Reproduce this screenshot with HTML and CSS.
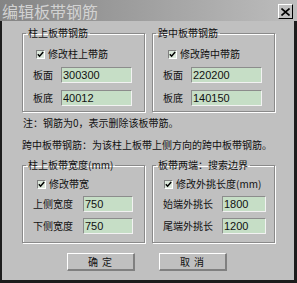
FILE: index.html
```html
<html lang="zh">
    <head>
        <title>编辑板带钢筋</title>
        <link rel="stylesheet" href="styles.css">
    </head>
    <body>
        <div class="window">
            <div class="titlebar">
                <span class="title">编辑板带钢筋</span>
                <span class="close">
                    <svg width="9" height="8" viewBox="0 0 9 8"><path d="M0.5 0.5 L8.5 7.5 M8.5 0.5 L0.5 7.5" stroke="#000" stroke-width="1.6" fill="none"/></svg>
                </span>
            </div>
            <div class="client">
                <div class="pair top-pair">
                    <fieldset class="group">
                        <legend>柱上板带钢筋</legend>
                        <div class="check-row"><span class="check"><svg width="7" height="7" viewBox="0 0 7 7"><path d="M0.8 3.2 L2.6 5.2 L6.2 1" stroke="#000" stroke-width="1.5" fill="none"/></svg></span>修改柱上带筋</div>
                        <div class="field"><span class="label">板面</span><input class="entry" type="text" value="300300"></div>
                        <div class="field"><span class="label">板底</span><input class="entry" type="text" value="40012"></div>
                    </fieldset>
                    <fieldset class="group">
                        <legend>跨中板带钢筋</legend>
                        <div class="check-row right"><span class="check"><svg width="7" height="7" viewBox="0 0 7 7"><path d="M0.8 3.2 L2.6 5.2 L6.2 1" stroke="#000" stroke-width="1.5" fill="none"/></svg></span>修改跨中带筋</div>
                        <div class="field"><span class="label">板面</span><input class="entry" type="text" value="220200"></div>
                        <div class="field"><span class="label">板底</span><input class="entry" type="text" value="140150"></div>
                    </fieldset>
                </div>

                <p class="note first">注：钢筋为0，表示删除该板带筋。</p>
                <p class="note">跨中板带钢筋：为该柱上板带上侧方向的跨中板带钢筋。</p>

                <div class="pair bottom-pair">
                    <fieldset class="group">
                        <legend>柱上板带宽度(mm)</legend>
                        <div class="check-row"><span class="check"><svg width="7" height="7" viewBox="0 0 7 7"><path d="M0.8 3.2 L2.6 5.2 L6.2 1" stroke="#000" stroke-width="1.5" fill="none"/></svg></span>修改带宽</div>
                        <div class="field"><span class="label wide">上侧宽度</span><input class="entry short" type="text" value="750"></div>
                        <div class="field"><span class="label wide">下侧宽度</span><input class="entry short" type="text" value="750"></div>
                    </fieldset>
                    <fieldset class="group">
                        <legend>板带两端：搜索边界</legend>
                        <div class="check-row near"><span class="check"><svg width="7" height="7" viewBox="0 0 7 7"><path d="M0.8 3.2 L2.6 5.2 L6.2 1" stroke="#000" stroke-width="1.5" fill="none"/></svg></span>修改外挑长度(mm)</div>
                        <div class="field"><span class="label wider">始端外挑长</span><input class="entry shorter" type="text" value="1800"></div>
                        <div class="field"><span class="label wider">尾端外挑长</span><input class="entry shorter" type="text" value="1200"></div>
                    </fieldset>
                </div>

                <div class="buttons">
                    <span class="btn">确&nbsp;定</span>
                    <span class="btn">取&nbsp;消</span>
                </div>
            </div>
        </div>
    </body>
</html>
```

FILE: styles.css
```css
body{
    margin:0;
    background:#c0c0c0;
    font-family: "Noto Sans CJK SC", "Noto Sans", sans-serif;
}
.window{
    width:297px;
    height:283px;
    display:flex;
    flex-direction:column;
}
.titlebar{
    height:21px;
    display:flex;
    align-items:center;
    justify-content:space-between;
    background:linear-gradient(to right, #848484, #bdbdbd);
    padding-left:2px;
    padding-right:4px;
}
.title{
    font-size:16px;
    line-height:18px;
    color:#d2d2d2;
}
.close{
    width:13px;
    height:13px;
    display:flex;
    align-items:center;
    justify-content:center;
    background:#c0c0c0;
    border-top:1px solid #fff;
    border-left:1px solid #fff;
    border-right:1px solid #000;
    border-bottom:1px solid #000;
    margin-top:2px;
}
.client{
    flex:1;
    border-left:2px solid #1c1c1c;
    border-right:3px solid #1c1c1c;
    border-bottom:3px solid #1c1c1c;
    padding-left:20px;
    font-size:10px;
    line-height:12px;
    color:#111;
}
.pair{
    display:grid;
    grid-template-columns:123px 123px;
    gap:7px;
}
.top-pair{
    margin-top:6px;
}
.bottom-pair{
    margin-top:8px;
}
.group{
    margin:0;
    padding:0 0 5px 0;
    border:1px solid #8a8a8a;
    box-shadow:inset 1px 1px 0 #fff, 1px 1px 0 #fff;
}
.bottom-pair .group{
    padding-bottom:8px;
}
legend{
    margin-left:3px;
    padding:0 2px;
    line-height:12px;
}
.check-row{
    display:flex;
    align-items:center;
    gap:3px;
    height:12px;
    margin-top:9px;
    padding-left:13px;
}
.check-row.right{
    padding-left:15px;
}
.bottom-pair .check-row{
    margin-top:7px;
    padding-left:14px;
}
.bottom-pair .check-row.near{
    padding-left:11px;
}
.check{
    width:7px;
    height:7px;
    display:flex;
    background:#dce8dc;
    border-top:1px solid #808080;
    border-left:1px solid #808080;
    border-right:1px solid #fff;
    border-bottom:1px solid #fff;
}
.field{
    display:flex;
    align-items:center;
    margin-top:7px;
    padding-left:10px;
}
.bottom-pair .field{
    margin-top:6px;
}
.label{
    width:28px;
}
.label.wide{
    width:50px;
}
.label.wider{
    width:59px;
}
.entry{
    box-sizing:border-box;
    width:71px;
    height:16px;
    margin:0;
    padding:0 1px;
    background:#c6dec6;
    border-top:1px solid #8c8c8c;
    border-left:1px solid #8c8c8c;
    border-right:1px solid #f2f2f2;
    border-bottom:1px solid #f2f2f2;
    font-family:"Liberation Sans", sans-serif;
    font-size:11px;
    color:#111;
}
.entry.short{
    width:50px;
}
.entry.shorter{
    width:44px;
}
.note{
    margin:5px 0 0 1px;
}
.note + .note{
    margin-top:10px;
    margin-left:0;
}
.buttons{
    display:flex;
    gap:24px;
    margin-top:10px;
    padding-left:45px;
}
.btn{
    box-sizing:border-box;
    width:68px;
    height:18px;
    display:flex;
    align-items:center;
    justify-content:center;
    letter-spacing:1px;
    border-top:1px solid #fff;
    border-left:1px solid #fff;
    border-right:2px solid #808080;
    border-bottom:2px solid #808080;
}
```
